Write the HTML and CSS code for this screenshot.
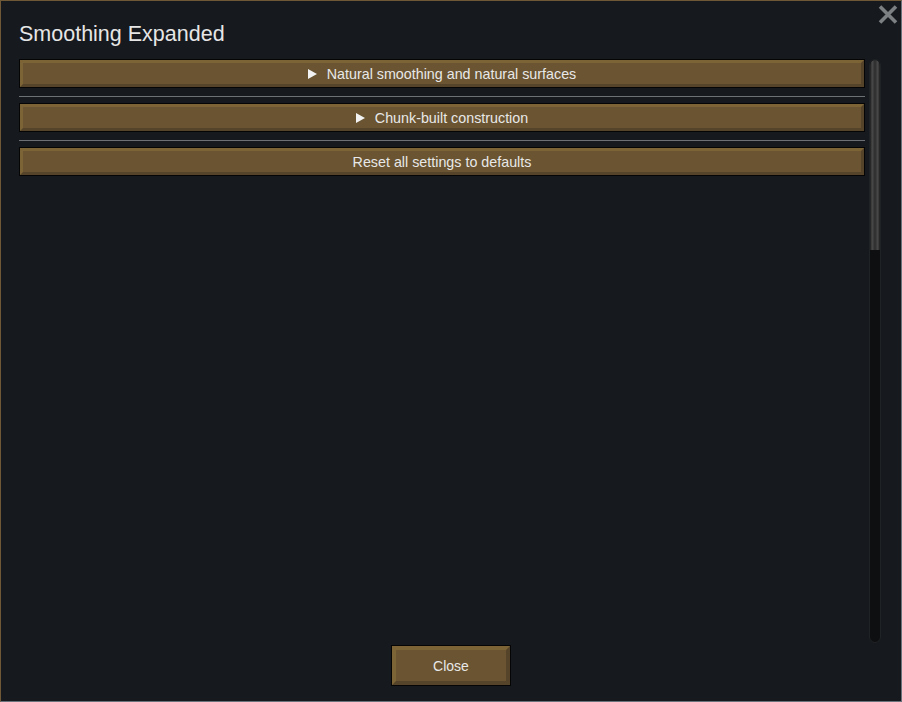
FILE: index.html
```html
<!DOCTYPE html>
<html lang="en">
<head>
    <meta charset="UTF-8">
    <title>Smoothing Expanded</title>
    <link rel="stylesheet" href="styles.css">
</head>
<body>
<div class="window">
    <button type="button" class="close-x" aria-label="Close">
        <svg width="20" height="19" viewBox="0 0 20 19">
            <path d="M2 1.5 L18 17.5 M18 1.5 L2 17.5" stroke="#7d8083" stroke-width="3.6" fill="none"/>
        </svg>
    </button>

    <h1 class="title">Smoothing Expanded</h1>

    <div class="content">
        <div class="settings-list">
            <button type="button" class="setting-btn">
                <svg class="arrow" width="9" height="10" viewBox="0 0 9 10"><polygon points="0,0 9,5 0,10" fill="#f2f2f2"/></svg>
                Natural smoothing and natural surfaces
            </button>
            <div class="separator"></div>
            <button type="button" class="setting-btn">
                <svg class="arrow" width="9" height="10" viewBox="0 0 9 10"><polygon points="0,0 9,5 0,10" fill="#f2f2f2"/></svg>
                Chunk-built construction
            </button>
            <div class="separator"></div>
            <button type="button" class="setting-btn">Reset all settings to defaults</button>
        </div>

        <div class="scrollbar">
            <div class="scroll-thumb"></div>
        </div>
    </div>

    <div class="footer">
        <button type="button" class="close-btn">Close</button>
    </div>
</div>
</body>
</html>
```

FILE: styles.css
```css
html, body {
    margin: 0;
    height: 100%;
}

body {
    background-color: #16191d;
    font-family: "Liberation Sans", Arial, sans-serif;
    color: #e4e4e4;
}

.window {
    position: relative;
    box-sizing: border-box;
    width: 902px;
    height: 702px;
    display: flex;
    flex-direction: column;
    padding: 18px 20px 15px 18px;
    background-color: #16191d;
    border-top: 1px solid #6e5836;
    border-left: 1px solid #6e5836;
    border-right: 1px solid #6a737b;
    border-bottom: 1px solid #6a737b;
}

/* Top right close cross */
.close-x {
    position: absolute;
    top: 4px;
    right: 3px;
    padding: 0;
    border: none;
    background: none;
    line-height: 0;
    cursor: pointer;
}

.title {
    margin: 0;
    height: 30px;
    font-size: 21.5px;
    font-weight: normal;
    line-height: 30px;
    color: #e6e6e6;
}

.content {
    flex: 1;
    display: flex;
    gap: 4px;
    margin-top: 10px;
    min-height: 0;
}

.settings-list {
    flex: 1;
    display: flex;
    flex-direction: column;
}

/* Wooden bevelled buttons */
.setting-btn,
.close-btn {
    box-sizing: border-box;
    display: flex;
    align-items: center;
    justify-content: center;
    gap: 10px;
    background-color: #6a5431;
    border-style: solid;
    border-color: #7c6436 #56442a #56442a #7c6436;
    box-shadow: 0 0 0 1px #050505;
    color: #e8e8e8;
    font-family: "Liberation Sans", Arial, sans-serif;
    font-size: 14.3px;
    cursor: pointer;
}

.setting-btn {
    height: 27px;
    margin: 1px 1px 0 1px;
    border-width: 3px;
    padding: 0;
}

.setting-btn:hover,
.close-btn:hover {
    background-color: #76603a;
}

.arrow {
    display: block;
}

.separator {
    height: 1px;
    margin: 9px 0 6px;
    background-color: #6c7176;
}

/* Scrollbar */
.scrollbar {
    box-sizing: border-box;
    width: 12px;
    height: 584px;
    border-radius: 6px;
    background-color: #0d0f11;
    border: 1px solid #202326;
    overflow: hidden;
}

.scroll-thumb {
    height: 190px;
    border-radius: 5px 5px 0 0;
    background: linear-gradient(to right, #1c1c1c 0, #4a4a4a 22%, #2c2c2c 50%, #4a4a4a 78%, #1c1c1c 100%);
}

.footer {
    display: flex;
    justify-content: center;
    padding-top: 3px;
    padding-left: 2px;
}

.close-btn {
    width: 118px;
    height: 39px;
    margin: 1px;
    border-width: 4px;
    padding: 0;
    font-size: 14px;
}
```
